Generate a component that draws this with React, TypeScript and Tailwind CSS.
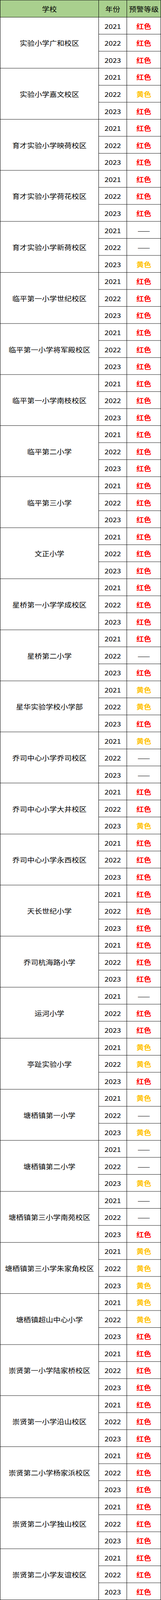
import { useEffect, useState } from "react";

const schools: [string, string][] = [
  ["实验小学广和校区", "rrr"],
  ["实验小学嘉文校区", "ryr"],
  ["育才实验小学映荷校区", "rrr"],
  ["育才实验小学荷花校区", "rrr"],
  ["育才实验小学新荷校区", "--y"],
  ["临平第一小学世纪校区", "rrr"],
  ["临平第一小学将军殿校区", "rrr"],
  ["临平第一小学南枝校区", "rrr"],
  ["临平第二小学", "rrr"],
  ["临平第三小学", "rrr"],
  ["文正小学", "rrr"],
  ["星桥第一小学学成校区", "rrr"],
  ["星桥第二小学", "r-r"],
  ["星华实验学校小学部", "yyr"],
  ["乔司中心小学乔司校区", "y--"],
  ["乔司中心小学大井校区", "rry"],
  ["乔司中心小学永西校区", "rrr"],
  ["天长世纪小学", "rrr"],
  ["乔司杭海路小学", "rrr"],
  ["运河小学", "-rr"],
  ["亭趾实验小学", "yyr"],
  ["塘栖镇第一小学", "y-y"],
  ["塘栖镇第二小学", "--y"],
  ["塘栖镇第三小学南苑校区", "--r"],
  ["塘栖镇第三小学朱家角校区", "yyy"],
  ["塘栖镇超山中心小学", "yyr"],
  ["崇贤第一小学陆家桥校区", "rrr"],
  ["崇贤第一小学沿山校区", "rrr"],
  ["崇贤第二小学杨家浜校区", "rrr"],
  ["崇贤第二小学独山校区", "rrr"],
  ["崇贤第二小学友谊校区", "rrr"],
];

const years = ["2021", "2022", "2023"];
const PAGE_H = 4607;

function Level({ code }: { code: string }) {
  if (code === "r") return <span className="font-bold text-[#ff0000]">红色</span>;
  if (code === "y") return <span className="font-bold text-[#ffc000]">黄色</span>;
  return <span className="text-black">——</span>;
}

const cell = "flex items-center justify-center border-r border-b border-black";

export default function App() {
  // the window can be shorter than the sheet; squeeze it so the whole sheet is in view
  const [fit, setFit] = useState(1);
  useEffect(() => {
    setFit(Math.min(1, window.innerHeight / PAGE_H));
  }, []);

  return (
    <div
      className="w-[412px] origin-top border-l border-t border-black bg-white font-['Noto_Sans_CJK_SC','Noto_Sans',sans-serif] text-[19px] leading-none text-black"
      style={{ transform: `scaleY(${fit})` }}
    >
      <div className="flex h-[49px] bg-[#a9d08e]">
        <div className={`${cell} w-[252px]`}>学校</div>
        <div className={`${cell} w-[72px]`}>年份</div>
        <div className={`${cell} w-[87px]`}>预警等级</div>
      </div>

      {schools.map(([name, levels]) => (
        <div key={name} className="flex">
          <div className={`${cell} h-[147px] w-[252px] whitespace-nowrap`}>{name}</div>
          <div className="flex flex-col">
            {years.map((y, i) => (
              <div key={y} className="flex h-[49px]">
                <div className={`${cell} w-[72px]`}>{y}</div>
                <div className={`${cell} w-[87px]`}>
                  <Level code={levels[i]} />
                </div>
              </div>
            ))}
          </div>
        </div>
      ))}
    </div>
  );
}
